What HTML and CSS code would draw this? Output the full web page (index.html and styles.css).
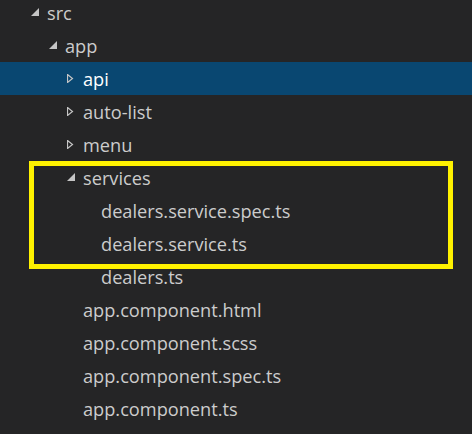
FILE: index.html
```html
<!DOCTYPE html>
<html>
<head>
<meta charset="utf-8">
<link rel="stylesheet" href="styles.css">
</head>
<body>
<div class="explorer">
  <div class="tree">
    <div class="row l0"><span class="twistie"><svg width="8" height="8" viewBox="0 0 8 8"><polygon points="8,0 8,8 0,8" class="tri-open"/></svg></span><span class="label">src</span></div>
    <div class="row l1"><span class="twistie"><svg width="8" height="8" viewBox="0 0 8 8"><polygon points="8,0 8,8 0,8" class="tri-open"/></svg></span><span class="label">app</span></div>
    <div class="row l2 selected"><span class="twistie"><svg width="8" height="9" viewBox="0 0 8 9"><polygon points="0.5,0.5 5.5,4.5 0.5,8.5" class="tri-closed"/></svg></span><span class="label">api</span></div>
    <div class="row l2"><span class="twistie"><svg width="8" height="9" viewBox="0 0 8 9"><polygon points="0.5,0.5 5.5,4.5 0.5,8.5" class="tri-closed"/></svg></span><span class="label">auto-list</span></div>
    <div class="row l2"><span class="twistie"><svg width="8" height="9" viewBox="0 0 8 9"><polygon points="0.5,0.5 5.5,4.5 0.5,8.5" class="tri-closed"/></svg></span><span class="label">menu</span></div>
    <div class="row l2"><span class="twistie"><svg width="8" height="8" viewBox="0 0 8 8"><polygon points="8,0 8,8 0,8" class="tri-open"/></svg></span><span class="label">services</span></div>
    <div class="row l3"><span class="twistie"></span><span class="label">dealers.service.spec.ts</span></div>
    <div class="row l3"><span class="twistie"></span><span class="label">dealers.service.ts</span></div>
    <div class="row l3"><span class="twistie"></span><span class="label">dealers.ts</span></div>
    <div class="row l2"><span class="twistie"></span><span class="label">app.component.html</span></div>
    <div class="row l2"><span class="twistie"></span><span class="label">app.component.scss</span></div>
    <div class="row l2"><span class="twistie"></span><span class="label">app.component.spec.ts</span></div>
    <div class="row l2"><span class="twistie"></span><span class="label">app.component.ts</span></div>
  </div>
  <div class="highlight"></div>
</div>
</body>
</html>
```

FILE: styles.css
```css
html, body {
  margin: 0;
  padding: 0;
  background: #252526;
}
.explorer {
  position: relative;
  width: 472px;
  height: 434px;
  overflow: hidden;
  font-family: "Open Sans", "Noto Sans", sans-serif;
  font-size: 18.2px;
  color: #cccccc;
}
.tree {
  margin-top: -4px;
}
.row {
  height: 33px;
  display: flex;
  align-items: center;
  white-space: nowrap;
}
.row.selected {
  background: #094771;
  color: #ffffff;
}
.l0 { padding-left: 31px; }
.l1 { padding-left: 49px; }
.l2 { padding-left: 67px; }
.l3 { padding-left: 85px; }
.twistie {
  width: 16px;
  flex: none;
  display: flex;
  align-items: center;
  height: 33px;
}
.twistie svg {
  display: block;
  margin-top: -1px;
}
.tri-open {
  fill: #c5c5c5;
}
.tri-closed {
  fill: none;
  stroke: #c5c5c5;
  stroke-width: 1.2;
}
.label {
  line-height: 33px;
  padding-top: 2px;
}
.highlight {
  position: absolute;
  left: 29px;
  top: 161px;
  width: 424px;
  height: 108px;
  box-sizing: border-box;
  border: 5px solid #fff200;
}
```
